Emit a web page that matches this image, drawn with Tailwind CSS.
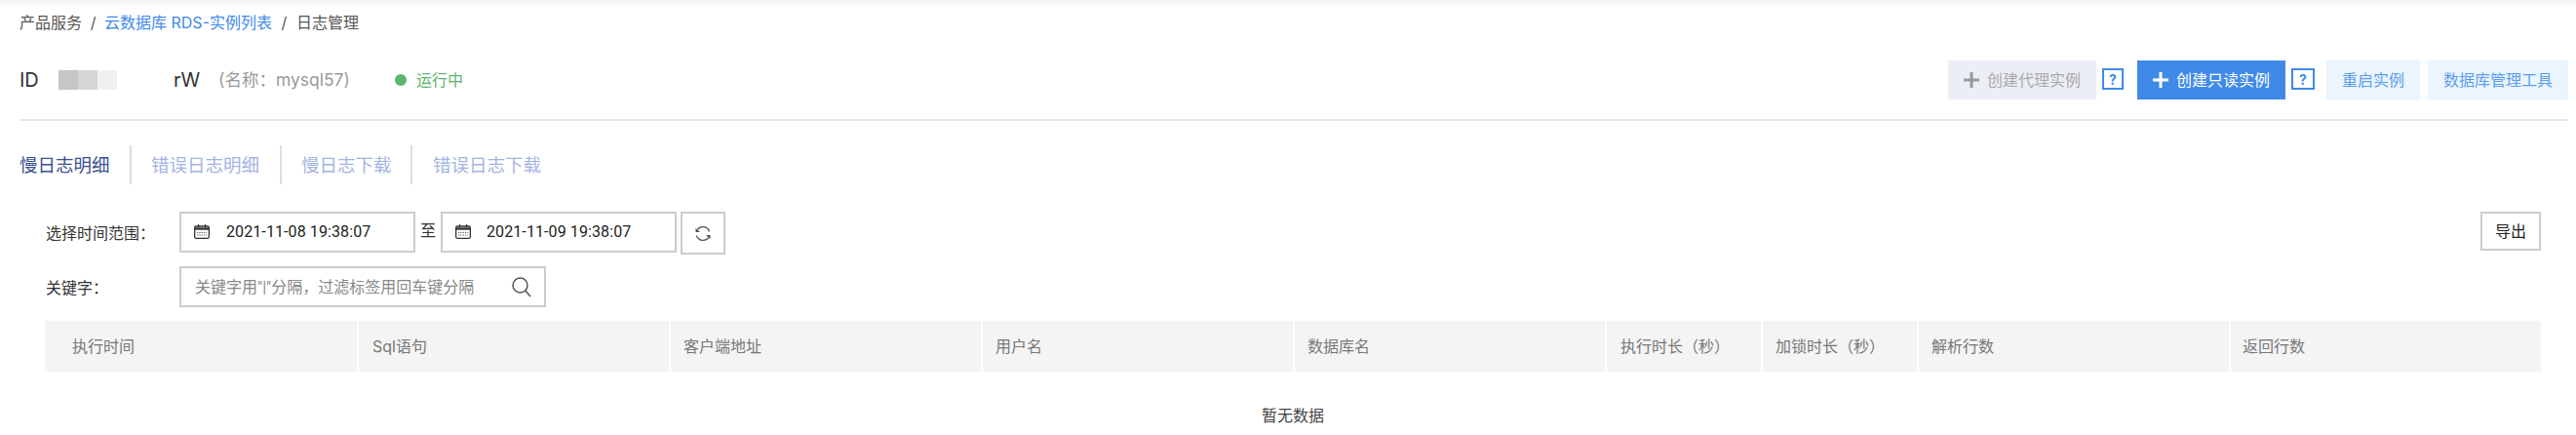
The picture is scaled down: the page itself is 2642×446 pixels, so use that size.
<!DOCTYPE html>
<html lang="zh-CN">
<head>
    <meta charset="UTF-8">
    <title>日志管理</title>
    <script src="https://cdn.jsdelivr.net/npm/@tailwindcss/browser@4"></script>
</head>
<body class="bg-white font-['Inter','Noto_Sans_CJK_SC',sans-serif] text-[16px] text-[#333] overflow-hidden">
    <div class="w-[2642px] h-[446px] overflow-hidden">
        <!-- top shadow + breadcrumb -->
        <div class="h-[46px] pl-5 pt-[11px] leading-6 flex bg-gradient-to-b from-[#f3f3f3] via-white via-[8px] to-white">
            <span class="text-[#555]">产品服务</span>
            <span class="text-[#555] w-[23px] text-center">/</span>
            <span class="text-[#3f8ae8]">云数据库 RDS-实例列表</span>
            <span class="text-[#555] w-[25px] text-center">/</span>
            <span class="text-[#555]">日志管理</span>
        </div>

        <!-- instance title -->
        <div class="ml-5 mr-2 h-[78px] border-b-2 border-[#e8e8ee] flex items-start">
            <div class="flex items-center h-[40px] mt-[16px] w-[1978px]">
                <span class="text-[20px] w-10 whitespace-nowrap text-[#333]">ID</span>
                <span class="w-[60px] h-5 flex">
                    <span class="w-5 h-5 bg-[#c6c6c6]"></span>
                    <span class="w-5 h-5 bg-[#d6d6d6]"></span>
                    <span class="w-5 h-5 bg-[#f0f0f0]"></span>
                </span>
                <span class="text-[20px] ml-[58px] w-[46px] text-[#333]">rW</span>
                <span class="text-[17.5px] text-[#999] w-[181px] whitespace-nowrap">(名称：mysql57)</span>
                <span class="w-3 h-3 rounded-full bg-[#5cb56e] mr-[10px]"></span>
                <span class="text-[#5cb56e]">运行中</span>
            </div>
            <div class="flex items-start mt-4 text-[16px]">
                <button class="w-[152px] h-10 bg-[#ebeef4] text-[#aaa] flex items-center justify-center gap-2">
                    <svg width="16" height="16" viewBox="0 0 16 16"><path d="M6.5 0h3v6.5H16v3H9.5V16h-3V9.5H0v-3h6.5z" fill="#999"/></svg>
                    创建代理实例
                </button>
                <span class="w-[22px] h-[22px] ml-[6px] mt-2 border-2 border-[#3f8ae8] text-[#3f8ae8] text-[14px] font-bold flex items-center justify-center">?</span>
                <button class="w-[152px] h-10 ml-[14px] bg-[#3f8ae8] text-white flex items-center justify-center gap-2">
                    <svg width="16" height="16" viewBox="0 0 16 16"><path d="M6.5 0h3v6.5H16v3H9.5V16h-3V9.5H0v-3h6.5z" fill="#fff"/></svg>
                    创建只读实例
                </button>
                <span class="w-6 h-[22px] ml-[6px] mt-2 border-2 border-[#3f8ae8] text-[#3f8ae8] text-[14px] font-bold flex items-center justify-center">?</span>
                <button class="w-[96px] h-10 ml-3 bg-[#eaf5fd] text-[#5c9ded]">重启实例</button>
                <button class="w-[144px] h-10 ml-2 bg-[#eaf5fd] text-[#5c9ded]">数据库管理工具</button>
            </div>
        </div>

        <!-- tabs -->
        <div class="flex h-10 mt-[25px] ml-5 text-[18.5px] items-center text-[#a3b4e2]">
            <span class="w-[115px] h-10 leading-10 text-[#3a4f8f] border-r-2 border-[#ddd]">慢日志明细</span>
            <span class="w-[154px] h-10 leading-10 pl-5 border-r-2 border-[#ddd]">错误日志明细</span>
            <span class="w-[134px] h-10 leading-10 pl-5 border-r-2 border-[#ddd]">慢日志下载</span>
            <span class="h-10 leading-10 pl-[21px]">错误日志下载</span>
        </div>

        <!-- filters -->
        <div class="mt-7 ml-[46px] w-[2560px] flex justify-between items-start">
            <div class="flex flex-col gap-3">
                <div class="flex items-start">
                    <span class="w-[138px] h-[42px] pl-px leading-[44px] text-[#333]">选择时间范围：</span>
                    <div class="w-[242px] h-[42px] border-2 border-[#ccc] flex items-center pl-[13px]">
                        <svg class="-mt-0.5" width="16" height="15" viewBox="0 0 16 15" fill="none" stroke="#333" stroke-width="1.3"><rect x=".65" y="2" width="14.7" height="12.3" rx="1.5"/><path d="M.65 4.5h14.7" stroke-width="2.4"/><path d="M4.5 0v3M11.5 0v3"/><path d="M3 8.5h10M3 11h10" stroke-dasharray="1.3 1" stroke-width="1.2" stroke="#666"/></svg>
                        <span class="ml-[17px] text-[#222] font-['Roboto',sans-serif] tracking-[0.1px]">2021-11-08 19:38:07</span>
                    </div>
                    <span class="w-[26px] text-center leading-[38px]">至</span>
                    <div class="w-[242px] h-[42px] border-2 border-[#ccc] flex items-center pl-[13px]">
                        <svg class="-mt-0.5" width="16" height="15" viewBox="0 0 16 15" fill="none" stroke="#333" stroke-width="1.3"><rect x=".65" y="2" width="14.7" height="12.3" rx="1.5"/><path d="M.65 4.5h14.7" stroke-width="2.4"/><path d="M4.5 0v3M11.5 0v3"/><path d="M3 8.5h10M3 11h10" stroke-dasharray="1.3 1" stroke-width="1.2" stroke="#666"/></svg>
                        <span class="ml-4 text-[#222] font-['Roboto',sans-serif] tracking-[0.1px]">2021-11-09 19:38:07</span>
                    </div>
                    <div class="w-[46px] h-11 ml-1 border-2 border-[#ccc] flex items-center justify-center">
                        <svg width="18" height="17" viewBox="0 0 18 17" fill="none" stroke="#555" stroke-width="1.3"><path d="M3.2 4.6A7 7 0 0 1 15.6 6.5"/><path d="M14.8 12.4A7 7 0 0 1 2.4 10.5"/><path d="M1.5 3 6 7H1.5zM16.5 14 12 10h4.5z" fill="#555" stroke="none"/></svg>
                    </div>
                </div>
                <div class="flex items-start">
                    <span class="w-[138px] h-[42px] pl-px leading-[44px] text-[#333]">关键字：</span>
                    <div class="w-[376px] h-[42px] border-2 border-[#ccc] flex items-center justify-between pl-[14px] pr-[13px]">
                        <span class="text-[#888]">关键字用<span class="font-['Roboto',sans-serif]">"|"</span>分隔，过滤标签用回车键分隔</span>
                        <svg width="20" height="21" viewBox="0 0 20 21" fill="none" stroke="#555" stroke-width="1.5"><circle cx="8.5" cy="8.5" r="7.5"/><path d="M13.8 14 19 20"/></svg>
                    </div>
                </div>
            </div>
            <button class="w-[62px] h-10 border-2 border-[#ccc] text-[#222]">导出</button>
        </div>

        <!-- table -->
        <div class="mt-[14px] ml-[46px] w-[2560px] h-[52px] grid grid-cols-[2fr_2fr_2fr_2fr_2fr_1fr_1fr_2fr_2fr] text-[#777]">
            <div class="bg-[#f4f4f4] pl-7 leading-[52px]">执行时间</div>
            <div class="bg-[#f4f4f4] border-l-2 border-white pl-[14px] leading-[52px]">Sql语句</div>
            <div class="bg-[#f4f4f4] border-l-2 border-white pl-[13px] leading-[52px]">客户端地址</div>
            <div class="bg-[#f4f4f4] border-l-2 border-white pl-[13px] leading-[52px]">用户名</div>
            <div class="bg-[#f4f4f4] border-l-2 border-white pl-[13px] leading-[52px]">数据库名</div>
            <div class="bg-[#f4f4f4] border-l-2 border-white pl-[14px] leading-[52px]">执行时长（秒）</div>
            <div class="bg-[#f4f4f4] border-l-2 border-white pl-[13px] leading-[52px]">加锁时长（秒）</div>
            <div class="bg-[#f4f4f4] border-l-2 border-white pl-[13px] leading-[52px]">解析行数</div>
            <div class="bg-[#f4f4f4] border-l-2 border-white pl-3 leading-[52px]">返回行数</div>
        </div>
        <div class="ml-[46px] w-[2560px] h-[64px] text-center leading-[90px] text-[#444]">暂无数据</div>
    </div>
</body>
</html>
